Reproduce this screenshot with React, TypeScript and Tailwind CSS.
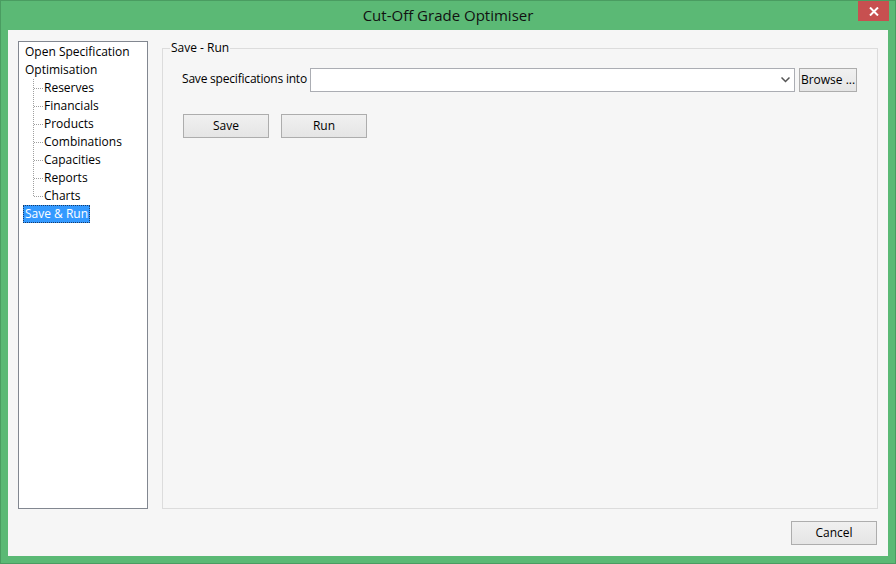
import React from 'react';

const children = ['Reserves', 'Financials', 'Products', 'Combinations', 'Capacities', 'Reports', 'Charts'];

const Connector: React.FC<{ last?: boolean }> = ({ last }) => (
  <svg width="11" height="18" className="shrink-0">
    <line x1="0.5" y1="0" x2="0.5" y2={last ? 9 : 18} stroke="#a0a0a0" strokeDasharray="1 1" />
    <line x1="1" y1="9.5" x2="10" y2="9.5" stroke="#a0a0a0" strokeDasharray="1 1" />
  </svg>
);

const WinButton: React.FC<{ label: string; className?: string }> = ({ label, className = '' }) => (
  <button
    className={`h-[24px] border border-[#adadad] bg-gradient-to-b from-[#f0f0f0] to-[#e5e5e5] text-[12px] text-black flex items-center justify-center shrink-0 ${className}`}
  >
    {label}
  </button>
);

export default function App() {
  return (
    <div className="w-[896px] h-[564px] bg-[#5bb975] border border-[#4a9c61] flex flex-col font-['Open_Sans',sans-serif] text-black">
      {/* title bar */}
      <div className="h-[29px] flex items-start relative">
        <div className="flex-1 text-center text-[15px] leading-[29px] text-[#111]">Cut-Off Grade Optimiser</div>
        <button className="absolute right-[6px] top-0 w-[31px] h-[20px] bg-[#c75050] flex items-center justify-center">
          <svg width="10" height="9" viewBox="0 0 10 9">
            <path d="M1 0.5 L9 8.5 M9 0.5 L1 8.5" stroke="white" strokeWidth="2" />
          </svg>
        </button>
      </div>

      {/* client */}
      <div className="flex-1 mx-[7px] mb-[7px] bg-[#f6f6f6] flex flex-col">
        <div className="flex gap-[14px] pl-[10px] pr-[10px] pt-[11px]">
          {/* tree */}
          <div className="w-[130px] h-[468px] bg-white border border-[#828790] pt-[1px] text-[12px] leading-[18px]">
            <div className="pl-[6px] h-[18px]">Open Specification</div>
            <div className="pl-[6px] h-[18px]">Optimisation</div>
            {children.map((c, i) => (
              <div key={c} className="flex h-[18px]">
                <div className="w-[14px] shrink-0" />
                <Connector last={i === children.length - 1} />
                <span>{c}</span>
              </div>
            ))}
            <div className="pl-[4px] h-[18px] flex">
              <span className="bg-[#3399ff] text-white px-[1px] border border-dotted border-[#1a3a66] leading-[16px]">Save &amp; Run</span>
            </div>
          </div>

          {/* group box */}
          <fieldset className="flex-1 h-[468px] border border-[#dcdcdc] pl-[19px] pr-[20px] pb-0 min-w-0">
            <legend className="text-[12px] px-[1px] ml-[-12px] leading-[14px]">Save - Run</legend>
            <div className="flex items-center mt-[13px]">
              <span className="text-[12px] w-[128px] shrink-0 whitespace-nowrap -mt-[3px] tracking-[-0.2px]">Save specifications into</span>
              <div className="flex-1 h-[24px] bg-white border border-[#abadb3] flex items-center justify-end pr-[4px]">
                <svg width="9" height="6" viewBox="0 0 9 6">
                  <path d="M0.5 0.5 L4.5 4.5 L8.5 0.5" stroke="#555" strokeWidth="1.5" fill="none" />
                </svg>
              </div>
              <WinButton label="Browse ..." className="w-[58px] ml-[4px]" />
            </div>
            <div className="flex gap-[12px] mt-[22px] ml-[1px]">
              <WinButton label="Save" className="w-[86px]" />
              <WinButton label="Run" className="w-[86px]" />
            </div>
          </fieldset>
        </div>
        <div className="flex justify-end pr-[11px] mt-[12px]">
          <WinButton label="Cancel" className="w-[86px] h-[23px]" />
        </div>
      </div>
    </div>
  );
}
